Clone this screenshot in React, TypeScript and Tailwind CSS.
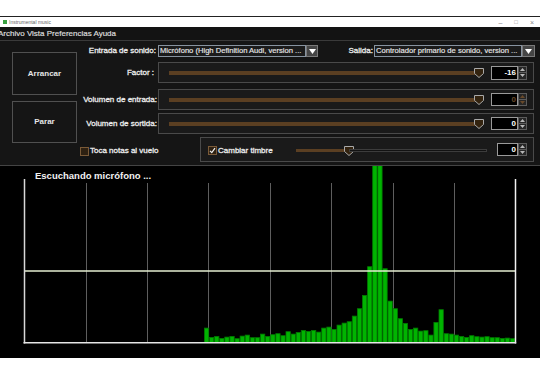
import React from "react";

const FONT = "font-['Liberation_Sans',Arial,sans-serif]";

const heights = [
  14.3, 5, 6, 4, 5.3, 6, 3.7, 6.3, 7.3, 4.7, 4.7, 8.3, 6,
  7.7, 8.7, 6.7, 10.7, 8.3, 10, 12, 11, 12, 10.3, 14.3, 15.3, 13, 17.3, 19.3, 20.7, 26.3, 33.7, 47, 75.7,
  180, 180, 73.7, 41.3, 33.7, 23.7, 19, 13, 14.3, 11.3, 11.7, 7.3, 20, 32.7, 8.7, 8.3, 7.3, 6, 5, 6.7,
  5.7, 5.3, 5.7, 4.7, 4.7, 4, 4.3, 3.7,
];

function Thumb({ className = "" }: { className?: string }) {
  return (
    <svg width="10" height="10" viewBox="0 0 10 10" className={`shrink-0 ${className}`}>
      <polygon points="0.5,0.5 9.5,0.5 9.5,5.5 5,9.5 0.5,5.5" fill="#33230f" stroke="#a9a9a9" strokeWidth="1" />
    </svg>
  );
}

function Spinner({ dim = false }: { dim?: boolean }) {
  const c = dim ? "#6a4a2a" : "#b8b8b8";
  return (
    <div className="flex h-full w-[9px] flex-col border border-[#5c5c5c] bg-[#262626]">
      <div className="flex flex-1 items-center justify-center border-b border-[#5c5c5c]">
        <svg width="5" height="3" viewBox="0 0 5 3">
          <polygon points="0,3 5,3 2.5,0" fill={c} />
        </svg>
      </div>
      <div className="flex flex-1 items-center justify-center">
        <svg width="5" height="3" viewBox="0 0 5 3">
          <polygon points="0,0 5,0 2.5,3" fill={c} />
        </svg>
      </div>
    </div>
  );
}

function NumBox({ value, wide = true, tall = false, dim = false }: { value: string; wide?: boolean; tall?: boolean; dim?: boolean }) {
  return (
    <div className={`flex shrink-0 ${tall ? "h-[14px]" : "h-[13px]"}`}>
      <div
        className={`${wide ? "w-[27px]" : "w-[21px]"} flex h-full items-center justify-end border border-[#9a9a9a] bg-black pr-[1px] text-[8px] font-bold leading-none ${dim ? "text-[#6a4a2a]" : "text-white"}`}
      >
        {value}
      </div>
      <Spinner dim={dim} />
    </div>
  );
}

function Combo({ text, wideBtn = false }: { text: string; wideBtn?: boolean }) {
  return (
    <div className="flex h-[12px] shrink-0">
      <div className="h-full w-[148px] overflow-hidden whitespace-nowrap border border-[#8793a0] bg-[#1b1b1b] pl-[1px] text-[7.6px] leading-[10px] text-[#e8e8e8] [-webkit-text-stroke:0.15px_#e8e8e8]">
        {text}
      </div>
      <div className={`${wideBtn ? "w-[13px]" : "w-[12px]"} flex h-full items-center justify-center border border-[#7a7a7a] bg-[#454545]`}>
        <svg width="7" height="5" viewBox="0 0 7 5">
          <polygon points="0,0 7,0 3.5,5" fill="#ffffff" />
        </svg>
      </div>
    </div>
  );
}

function SliderFrame({ value, tall = false, dim = false }: { value: string; tall?: boolean; dim?: boolean }) {
  return (
    <div className="flex h-[21px] items-center border border-[#4a4a4a] bg-[#1a1a1a] pl-[10px] pr-[6px]">
      <div className="flex flex-1 items-center">
        <div className="h-[4px] flex-1 bg-[#5b3f22]" />
        <Thumb className="-ml-[5px]" />
      </div>
      <div className="ml-[7px]">
        <NumBox value={value} tall={tall} dim={dim} />
      </div>
    </div>
  );
}

const LBL = "text-[8px] leading-none text-[#ececec] whitespace-nowrap [-webkit-text-stroke:0.3px_#ececec]";

function Label({ text, pr = "pr-[2px]" }: { text: string; pr?: string }) {
  return <div className={`w-[81px] shrink-0 text-right ${LBL} ${pr}`}>{text}</div>;
}

function CheckBox({ checked }: { checked: boolean }) {
  return (
    <div className="flex h-[9px] w-[9px] shrink-0 items-center justify-center border border-[#7a5a38] bg-[#2e2112]">
      {checked && (
        <svg width="7" height="7" viewBox="0 0 7 7">
          <polyline points="1,3.8 2.8,5.6 6,1.2" fill="none" stroke="#f0f0f0" strokeWidth="1.2" />
        </svg>
      )}
    </div>
  );
}

function Chart() {
  const grid = [86.5, 147.5, 208.5, 270.5, 331.5, 393.5, 454.5];
  return (
    <svg width="540" height="192" viewBox="0 0 540 192" className="block">
      {grid.map((x) => (
        <line key={x} x1={x} y1={17} x2={x} y2={176} stroke="#5e5e5e" strokeWidth="1" />
      ))}
      {heights.map((h, i) => {
        const x = 204 + i * 5.1;
        return (
          <rect key={i} x={x + 0.4} y={176 - h + 0.4} width={4.3} height={h} fill="#00b400" stroke="#007a00" strokeWidth="0.8" />
        );
      })}
      <line x1={24} y1={105} x2={515.5} y2={105} stroke="#e6efd2" strokeWidth="1.5" />
      <line x1={24.5} y1={13} x2={24.5} y2={177.5} stroke="#d8d8d8" strokeWidth="1.5" />
      <line x1={515.5} y1={13} x2={515.5} y2={177.5} stroke="#f2f2f2" strokeWidth="1.5" />
      <line x1={23.5} y1={176.8} x2={516.2} y2={176.8} stroke="#e6e6e6" strokeWidth="1.5" />
    </svg>
  );
}

export default function App() {
  return (
    <div className={`flex h-[374px] w-[540px] flex-col overflow-hidden bg-white ${FONT}`}>
      <div className="h-[16px] shrink-0 bg-white" />
      <div className="h-[1px] shrink-0 bg-[#222222]" />
      {/* title bar */}
      <div className="flex h-[10px] shrink-0 items-center bg-white pl-[3px]">
        <div className="h-[4px] w-[4px] bg-[#3aa040]" />
        <span className="ml-[2px] text-[5px] leading-none text-[#666]">Instrumental music</span>
        <div className="flex-1" />
        <span className="text-[7px] leading-none text-[#888]">–</span>
        <span className="ml-[12px] text-[6px] leading-none text-[#888]">□</span>
        <span className="ml-[12px] mr-[6px] text-[7px] leading-none text-[#888]">×</span>
      </div>
      {/* menu bar */}
      <div className="flex h-[13px] shrink-0 items-center bg-[#131313]">
        <span className="-ml-[2px] whitespace-nowrap text-[8px] leading-none text-[#dcdcdc] [-webkit-text-stroke:0.2px_#dcdcdc]">Archivo Vista Preferencias Ayuda</span>
      </div>
      <div className="h-[1px] shrink-0 bg-[#3a3a3a]" />
      {/* control panel */}
      <div className="flex h-[124px] shrink-0 items-start bg-[#151515] pl-[12px] pr-[5px]">
        <div className="mt-[11px] flex w-[65px] shrink-0 flex-col gap-[6px]">
          <div className="flex h-[43px] items-center justify-center border border-[#505050] text-[8px] font-bold text-[#e6e6e6]">Arrancar</div>
          <div className="flex h-[42px] items-center justify-center border border-[#505050] text-[8px] font-bold text-[#e6e6e6]">Parar</div>
        </div>
        <div className="flex flex-1 flex-col pt-[4px]">
          <div className="flex h-[12px] items-center">
            <Label text="Entrada de sonido:" />
            <Combo text="Micrófono (High Definition Audi, version ..." />
            <div className={`flex-1 pr-[1px] text-right ${LBL}`}>Salida:</div>
            <Combo text="Controlador primario de sonido, version ..." wideBtn />
          </div>
          <div className="mr-[1px] mt-[5px] flex items-center">
            <Label text="Factor :" pr="pr-[4px]" />
            <div className="flex-1">
              <SliderFrame value="-16" tall />
            </div>
          </div>
          <div className="mr-[1px] mt-[6px] flex items-center">
            <Label text="Volumen de entrada:" pr="pr-[1px]" />
            <div className="flex-1">
              <SliderFrame value="0" dim />
            </div>
          </div>
          <div className="mr-[1px] mt-[3px] flex items-center">
            <Label text="Volumen de sortida:" pr="pr-[1px]" />
            <div className="flex-1">
              <SliderFrame value="0" />
            </div>
          </div>
          <div className="mr-[1px] mt-[3px] flex items-center">
            <div className="flex w-[123px] shrink-0 items-center pl-[3px] pt-[3px]">
              <CheckBox checked={false} />
              <span className={`ml-[1px] ${LBL}`}>Toca notas al vuelo</span>
            </div>
            <div className="flex h-[25px] flex-1 items-center border border-[#4a4a4a] bg-[#1a1a1a] pl-[7px] pr-[6px]">
              <div className="flex items-center pt-[2px]">
                <CheckBox checked />
                <span className={`ml-[1px] ${LBL}`}>Cambiar timbre</span>
              </div>
              <div className="ml-auto flex w-[191px] shrink-0 items-center pt-[2px]">
                <div className="h-[3px] w-[53px] bg-[#5b3f22]" />
                <Thumb className="-mx-[5px]" />
                <div className="h-[3px] flex-1 border border-[#3c3c3c] bg-[#121212]" />
              </div>
              <div className="ml-[10px]">
                <NumBox value="0" wide={false} />
              </div>
            </div>
          </div>
        </div>
      </div>
      <div className="h-[1px] shrink-0 bg-[#444444]" />
      {/* graph area */}
      <div className="relative h-[192px] shrink-0 bg-black">
        <Chart />
        <div className="absolute left-[35px] top-[4px] whitespace-nowrap text-[9.5px] font-bold leading-[12px] text-[#f2f2f2]">
          Escuchando micrófono ...
        </div>
      </div>
      <div className="flex-1 bg-white" />
    </div>
  );
}
